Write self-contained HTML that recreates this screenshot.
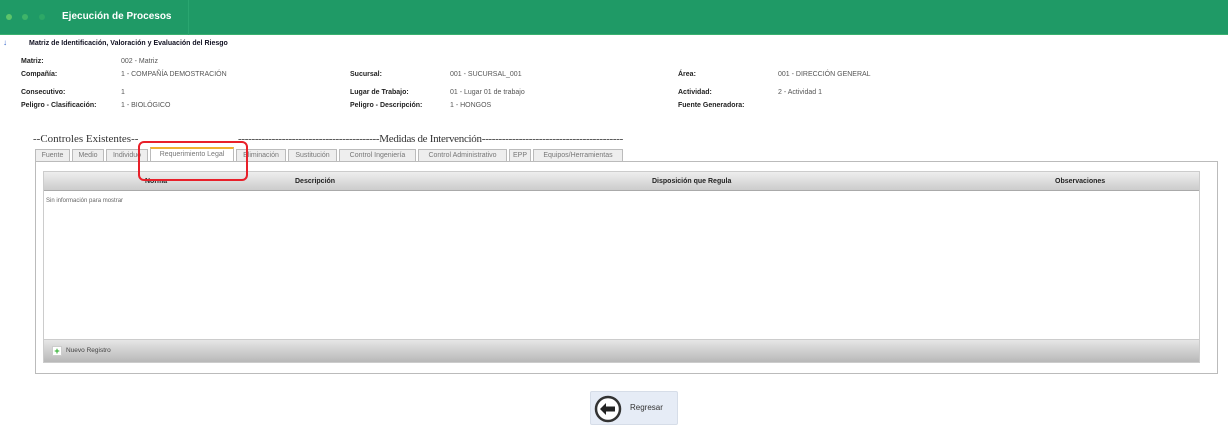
<!DOCTYPE html>
<html><head><meta charset="utf-8"><style>
*{margin:0;padding:0;box-sizing:border-box}
body{width:1228px;height:426px;background:#fff;font-family:"Liberation Sans",sans-serif;position:relative;overflow:hidden;font-size:7px;color:#555}
.a{position:absolute;white-space:nowrap}
.b{font-weight:bold;color:#222}
.hdr{position:absolute;left:0;top:0;width:1228px;height:35px;background:#1f9a66;border-bottom:1px solid #3bb070}
.dot{position:absolute;top:14px;width:6px;height:6px;border-radius:50%}
.tab{position:absolute;top:149px;height:13px;border:1px solid #bbb;background:#eee;font-size:7px;color:#777;padding:2px 0;white-space:nowrap;text-align:center;overflow:hidden}
.serif{font-family:"Liberation Serif",serif;font-size:11px;color:#333}
</style></head><body>
<div class="hdr">
<div class="dot" style="left:6px;background:#5cc46a"></div>
<div class="dot" style="left:22px;background:#3fb469"></div>
<div class="dot" style="left:39px;background:#2da866"></div>
<div class="a" style="left:62px;top:11px;color:#fff;font-weight:bold;font-size:10px">Ejecución de Procesos</div>
<div style="position:absolute;left:188px;top:0;width:1px;height:35px;background:#2aa670"></div>
</div>
<div class="a" style="left:3px;top:38px;color:#36c;font-size:8px">↓</div>
<div class="a b" style="left:29px;top:40px;font-size:7px;color:#112">Matriz de Identificación, Valoración y Evaluación del Riesgo</div>

<div class="a b" style="left:21px;top:58px">Matriz:</div><div class="a" style="left:121px;top:58px">002 - Matriz</div>
<div class="a b" style="left:21px;top:71px">Compañía:</div><div class="a" style="left:121px;top:71px">1 - COMPAÑÍA DEMOSTRACIÓN</div>
<div class="a b" style="left:21px;top:89px">Consecutivo:</div><div class="a" style="left:121px;top:89px">1</div>
<div class="a b" style="left:21px;top:102px">Peligro - Clasificación:</div><div class="a" style="left:121px;top:102px">1 - BIOLÓGICO</div>
<div class="a b" style="left:350px;top:71px">Sucursal:</div><div class="a" style="left:450px;top:71px">001 - SUCURSAL_001</div>
<div class="a b" style="left:350px;top:89px">Lugar de Trabajo:</div><div class="a" style="left:450px;top:89px">01 - Lugar 01 de trabajo</div>
<div class="a b" style="left:350px;top:102px">Peligro - Descripción:</div><div class="a" style="left:450px;top:102px">1 - HONGOS</div>
<div class="a b" style="left:678px;top:71px">Área:</div><div class="a" style="left:778px;top:71px">001 - DIRECCIÓN GENERAL</div>
<div class="a b" style="left:678px;top:89px">Actividad:</div><div class="a" style="left:778px;top:89px">2 - Actividad 1</div>
<div class="a b" style="left:678px;top:102px">Fuente Generadora:</div>

<div class="a serif" style="left:33px;top:133px">--Controles Existentes--</div>
<div class="a serif" style="left:238px;top:133px;letter-spacing:-0.3px">------------------------------------------Medidas de Intervención------------------------------------------</div>

<div class="tab" style="left:35px;width:35px">Fuente</div>
<div class="tab" style="left:72px;width:32px">Medio</div>
<div class="tab" style="left:106px;width:42px">Individuo</div>
<div class="tab" style="left:150px;width:84px;background:#fff;border-top:2px solid #f0b030;border-bottom-color:#fff;top:147px;height:15px">Requerimiento Legal</div>
<div class="tab" style="left:236px;width:50px">Eliminación</div>
<div class="tab" style="left:288px;width:49px">Sustitución</div>
<div class="tab" style="left:339px;width:77px">Control Ingeniería</div>
<div class="tab" style="left:418px;width:89px">Control Administrativo</div>
<div class="tab" style="left:509px;width:22px">EPP</div>
<div class="tab" style="left:533px;width:90px">Equipos/Herramientas</div>

<div style="position:absolute;left:35px;top:161px;width:1183px;height:213px;border:1px solid #bbb;background:#fff"></div>
<div style="position:absolute;left:43px;top:171px;width:1157px;height:192px;border:1px solid #ccc"></div>
<div style="position:absolute;left:44px;top:172px;width:1155px;height:19px;background:linear-gradient(#eee,#ccc);border-bottom:1px solid #aaa"></div>
<div class="a b" style="left:145px;top:178px">Norma</div>
<div class="a b" style="left:295px;top:178px">Descripción</div>
<div class="a b" style="left:652px;top:178px">Disposición que Regula</div>
<div class="a b" style="left:1055px;top:178px">Observaciones</div>
<div class="a" style="left:46px;top:198px;font-size:6px;color:#666">Sin información para mostrar</div>
<div style="position:absolute;left:44px;top:339px;width:1155px;height:23px;background:linear-gradient(#e6e6e6,#b8b8b8);border-top:1px solid #ccc"></div>
<div class="a" style="left:52px;top:346px;width:10px;height:10px;background:#fff;border:1px solid #ccc;color:#2a2;font-weight:bold;font-size:9px;line-height:8px;text-align:center">+</div>
<div class="a" style="left:66px;top:347px;font-size:6.5px;color:#444">Nuevo Registro</div>

<div style="position:absolute;left:138px;top:141px;width:110px;height:40px;border:2px solid #e8202a;border-radius:6px"></div>

<div style="position:absolute;left:590px;top:391px;width:88px;height:34px;background:#e6ecf6;border:1px solid #d6dde8;border-radius:2px"></div>
<svg class="a" style="left:594px;top:395px" width="28" height="28" viewBox="0 0 28 28"><circle cx="14" cy="14" r="12" fill="#fff" stroke="#333" stroke-width="2.5"/><path d="M6 14 L12 8 L12 11.5 L21 11.5 L21 16.5 L12 16.5 L12 20 Z" fill="#222"/></svg>
<div class="a" style="left:630px;top:403px;font-size:8px;color:#333">Regresar</div>
</body></html>
